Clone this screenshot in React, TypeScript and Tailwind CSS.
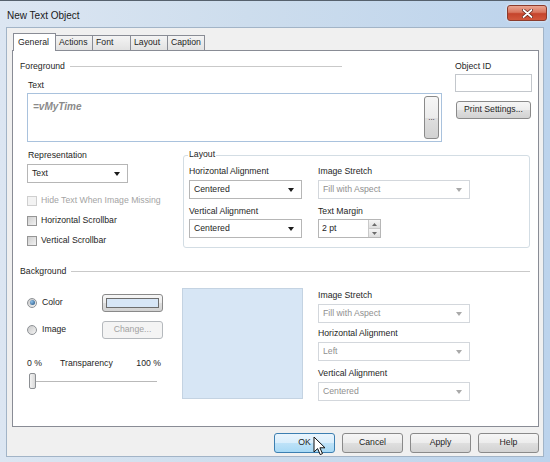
import React from "react";

type Kids = { children?: React.ReactNode };

function Caret({ disabled }: { disabled?: boolean }) {
  return (
    <svg width="6" height="4" viewBox="0 0 6 4">
      <path d="M0 0h6L3 4z" fill={disabled ? "#a9a9a9" : "#1b1b1b"} />
    </svg>
  );
}

function Label({ children, className = "" }: Kids & { className?: string }) {
  return <div className={`h-[11px] leading-[11px] ${className}`}>{children}</div>;
}

function Select({ value, className = "", disabled }: { value: string; className?: string; disabled?: boolean }) {
  return (
    <div
      className={`flex h-[19px] items-center justify-between border bg-white pl-[4px] pr-[7px] ${
        disabled ? "border-[#d3d7dc] text-[#8f8f8f]" : "border-[#b6b6b6] text-[#1e1e1e]"
      } ${className}`}
    >
      <span>{value}</span>
      <Caret disabled={disabled} />
    </div>
  );
}

function WinButton({
  children,
  className = "",
  disabled,
  focused,
}: Kids & { className?: string; disabled?: boolean; focused?: boolean }) {
  const look = focused
    ? "border-[#3c7fb1] bg-[linear-gradient(#eaf5fd,#d9eefc_50%,#bee2f8_51%,#a7d9f5)]"
    : disabled
    ? "border-[#b5b9bd] bg-[#f4f4f4] text-[#a2a2a2]"
    : "border-[#8a8a8a] bg-[linear-gradient(#f6f6f6,#ececec_50%,#dfdfdf_51%,#d2d2d2)]";
  return (
    <div className={`flex items-center justify-center rounded-[3px] border ${look} ${className}`}>{children}</div>
  );
}

function Check({ label, disabled }: { label: string; disabled?: boolean }) {
  return (
    <div className="flex h-[20px] items-center">
      <div
        className={`h-[10px] w-[10px] border ${
          disabled ? "border-[#cfcfcf] bg-[#f3f3f3]" : "border-[#969696] bg-[linear-gradient(135deg,#cfcfcf,#f2f2f2)]"
        }`}
      />
      <span className={`ml-[4px] ${disabled ? "text-[#a4a4a4]" : ""}`}>{label}</span>
    </div>
  );
}

function Radio({ label, checked }: { label: string; checked?: boolean }) {
  return (
    <div className="flex items-center">
      <div className="flex h-[10px] w-[10px] items-center justify-center rounded-full border border-[#8e9296] bg-[linear-gradient(135deg,#c9c9c9,#f4f4f4)]">
        {checked && <div className="h-[5px] w-[5px] rounded-full bg-[radial-gradient(circle_at_35%_35%,#8fc1ea,#1d4f7e)]" />}
      </div>
      <span className="ml-[5px]">{label}</span>
    </div>
  );
}

function Header({ title, className = "" }: { title: string; className?: string }) {
  return (
    <div className={`flex h-[11px] items-center ${className}`}>
      <span className="leading-[11px]">{title}</span>
      <div className="ml-[5px] h-px flex-1 bg-[#c9c9c9]" />
    </div>
  );
}

function Spinner() {
  return (
    <div className="flex h-[19px] w-[63px] items-stretch border border-[#b6b6b6] bg-white">
      <span className="flex-1 pl-[3px] leading-[17px]">2 pt</span>
      <div className="flex w-[12px] flex-col border-l border-[#c9c9c9]">
        <div className="flex flex-1 items-center justify-center bg-[linear-gradient(#f5f5f5,#dedede)]">
          <svg width="5" height="3" viewBox="0 0 5 3">
            <path d="M0 3h5L2.5 0z" fill="#6b6b6b" />
          </svg>
        </div>
        <div className="flex flex-1 items-center justify-center border-t border-[#c9c9c9] bg-[linear-gradient(#f5f5f5,#dedede)]">
          <svg width="5" height="3" viewBox="0 0 5 3">
            <path d="M0 0h5L2.5 3z" fill="#6b6b6b" />
          </svg>
        </div>
      </div>
    </div>
  );
}

function Tab({ label, width, active }: { label: string; width: string; active?: boolean }) {
  if (active) {
    return (
      <div
        className={`relative z-10 mb-[-1px] flex h-[18px] items-center border-x border-t border-[#898c95] bg-white pl-[4px] ${width}`}
      >
        {label}
      </div>
    );
  }
  return (
    <div
      className={`flex h-[15px] items-center border-r border-t border-[#898c95] bg-[linear-gradient(#f4f4f4,#e2e2e2)] pl-[3px] ${width}`}
    >
      {label}
    </div>
  );
}

function CloseButton() {
  return (
    <div className="mr-[3px] ml-auto mt-[4px] flex h-[16px] w-[40px] items-center justify-center self-start rounded-[3px] border border-[#8b3b2c] bg-[linear-gradient(#eaa591,#d9765f_45%,#c5442c_55%,#d2583c)] shadow-[0_0_3px_rgba(255,255,255,0.8)]">
      <svg width="11" height="9" viewBox="0 0 11 9">
        <path d="M1.5 1l8 7M9.5 1l-8 7" stroke="#5a1f15" strokeWidth="3.2" strokeLinecap="round" />
        <path d="M1.5 1l8 7M9.5 1l-8 7" stroke="#ffffff" strokeWidth="1.8" strokeLinecap="round" />
      </svg>
    </div>
  );
}

function Pointer() {
  return (
    <svg className="absolute left-[313px] top-[435px] z-20" width="13" height="20" viewBox="0 0 13 20">
      <path d="M1 1v15l3.6-3.4 2.6 6 2.3-1-2.6-5.8H12z" fill="#ffffff" stroke="#111111" strokeWidth="1" strokeLinejoin="round" />
    </svg>
  );
}

export default function App() {
  return (
    <div className="relative flex h-[462px] w-[550px] flex-col overflow-hidden border-t border-[#56616d] bg-[linear-gradient(to_right,#dce6f2,#cddded_45%,#bcd3ec)] font-['Liberation_Sans',Arial,sans-serif] text-[8.7px] text-[#1e1e1e]">
      {/* title bar */}
      <div className="flex h-[26px] items-center pl-[7px]">
        <span className="pt-[2px] text-[10px] text-[#1a1a1a]">New Text Object</span>
        <CloseButton />
      </div>

      {/* client area */}
      <div className="ml-[6px] flex h-[430px] w-[538px] flex-col border border-[#a2b4c7] bg-[#f0f0f0]">
        <div className="flex h-[22px] items-end pl-[6px]">
          <Tab label="General" width="w-[43px]" active />
          <Tab label="Actions" width="w-[37px]" />
          <Tab label="Font" width="w-[38px]" />
          <Tab label="Layout" width="w-[37px]" />
          <Tab label="Caption" width="w-[37px]" />
        </div>

        {/* General page */}
        <div className="ml-[5px] h-[377px] w-[527px] border border-[#898c95] bg-white pl-[7px] pt-[10px]">
          <div className="flex">
            <div className="w-[422px]">
              <Header title="Foreground" className="w-[322px]" />
              <Label className="ml-[8px] mt-[8px]">Text</Label>
              <div className="ml-[7px] mt-[2px] flex h-[49px] w-[415px] border border-[#a9c2dd] bg-white">
                <div className="flex-1 pl-[5px] pt-[5px] text-[10px] font-bold italic text-[#8a8a8a]">=vMyTime</div>
                <WinButton className="my-[2px] mr-[2px] w-[15px] text-[8px]">...</WinButton>
              </div>
            </div>
            <div className="ml-[13px] w-[77px]">
              <Label>Object ID</Label>
              <div className="mt-[2px] h-[18px] border border-[#c3c7cc] bg-white" />
              <WinButton className="ml-[1px] mt-[9px] h-[18px] w-[75px]">Print Settings...</WinButton>
            </div>
          </div>

          <div className="mt-[8px] flex">
            <div className="ml-[7px] w-[156px]">
              <Label className="pl-[1px]">Representation</Label>
              <Select value="Text" className="mt-[3px] w-[101px]" />
              <div className="mt-[8px]">
                <Check label="Hide Text When Image Missing" disabled />
                <Check label="Horizontal Scrollbar" />
                <Check label="Vertical Scrollbar" />
              </div>
            </div>
            <div className="relative mt-[5px] h-[93px] w-[347px] rounded-[3px] border border-[#d3dde4]">
              <span className="absolute left-[4px] top-[-7px] bg-white px-[1px] leading-[11px]">Layout</span>
              <div className="flex gap-[16px] pl-[5px] pt-[10px]">
                <div className="w-[113px]">
                  <Label>Horizontal Alignment</Label>
                  <Select value="Centered" className="mt-[3px]" />
                  <Label className="mt-[7px]">Vertical Alignment</Label>
                  <Select value="Centered" className="mt-[2px]" />
                </div>
                <div className="w-[152px]">
                  <Label>Image Stretch</Label>
                  <Select value="Fill with Aspect" disabled className="mt-[3px]" />
                  <Label className="mt-[7px]">Text Margin</Label>
                  <div className="mt-[2px]">
                    <Spinner />
                  </div>
                </div>
              </div>
            </div>
          </div>

          <Header title="Background" className="mt-[15px] w-[510px]" />

          <div className="mt-[11px] flex">
            <div className="ml-[7px] w-[155px] pt-[6px]">
              <div className="flex h-[18px] items-center">
                <div className="w-[75px]">
                  <Radio label="Color" checked />
                </div>
                <WinButton className="h-[18px] w-[61px] p-[3px]">
                  <div className="h-full w-full border border-[#6d6d6d] bg-[#d7e6f6]" />
                </WinButton>
              </div>
              <div className="mt-[9px] flex h-[18px] items-center">
                <div className="w-[75px]">
                  <Radio label="Image" />
                </div>
                <WinButton disabled className="h-[18px] w-[61px]">
                  Change...
                </WinButton>
              </div>
              <div className="mt-[19px] flex w-[134px] leading-[11px]">
                <span className="w-[33px]">0 %</span>
                <span>Transparency</span>
                <span className="ml-auto">100 %</span>
              </div>
              <div className="relative mt-[4px] h-[16px] w-[130px]">
                <div className="absolute left-[3px] right-0 top-[8px] h-[2px] border-b border-white bg-[#b9b9b9]" />
                <div className="absolute left-[2px] top-0 h-[16px] w-[7px] rounded-[2px] border border-[#8c8f93] bg-[linear-gradient(to_right,#f3f3f3,#d9d9d9)]" />
              </div>
            </div>
            <div className="h-[111px] w-[121px] border border-[#c4d3e2] bg-[#d7e6f5]" />
            <div className="ml-[15px] w-[152px] pt-[2px]">
              <Label>Image Stretch</Label>
              <Select value="Fill with Aspect" disabled className="mt-[3px]" />
              <Label className="mt-[5px]">Horizontal Alignment</Label>
              <Select value="Left" disabled className="mt-[3px]" />
              <Label className="mt-[7px]">Vertical Alignment</Label>
              <Select value="Centered" disabled className="mt-[3px]" />
            </div>
          </div>
        </div>

        <div className="mt-[6px] flex justify-end gap-[7px] pr-[4px]">
          <WinButton focused className="h-[20px] w-[61px]">
            OK
          </WinButton>
          <WinButton className="h-[20px] w-[61px]">Cancel</WinButton>
          <WinButton className="h-[20px] w-[61px]">Apply</WinButton>
          <WinButton className="h-[20px] w-[61px]">Help</WinButton>
        </div>
      </div>
      <Pointer />
    </div>
  );
}
